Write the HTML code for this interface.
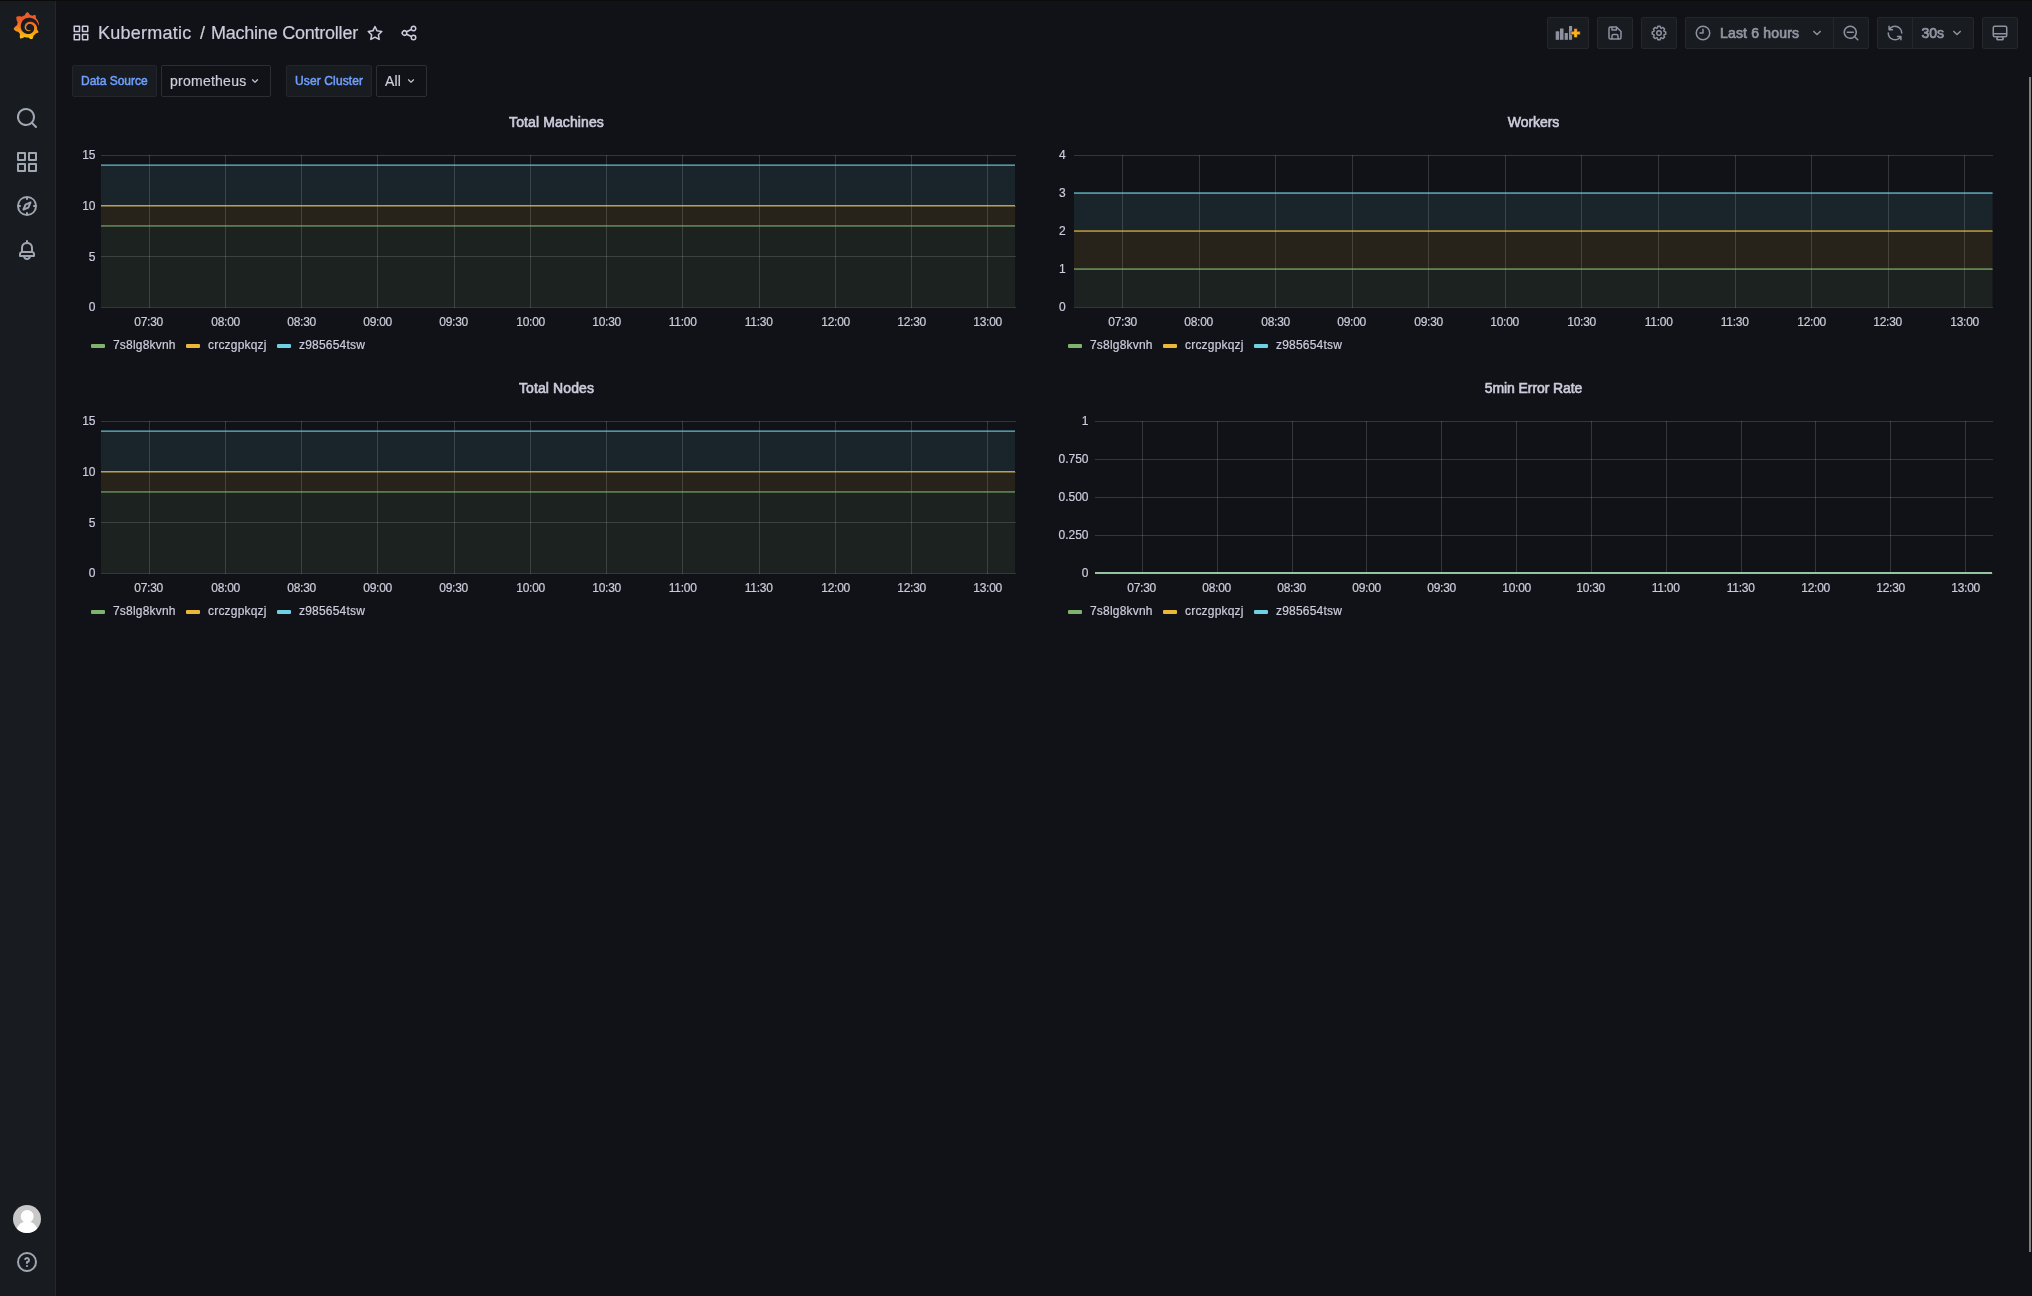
<!DOCTYPE html>
<html lang="en"><head><meta charset="utf-8"><title>Kubermatic / Machine Controller - Grafana</title>
<style>
html,body{margin:0;padding:0;}
body{width:2032px;height:1296px;overflow:hidden;background:#111217;color:#ccccdc;font-family:"Liberation Sans",sans-serif;font-size:14px;position:relative;}
.abs,.ic,.t{position:absolute;}
.ic{display:block;}
.t{white-space:pre;line-height:1;-webkit-text-stroke:0.2px currentColor;}
.side{left:0;top:0;width:55px;height:1296px;background:#181b1f;border-right:1px solid #24262c;}
.btn{position:absolute;top:17px;height:30px;background:#181b1f;border:1px solid #24272d;border-radius:2px;}
.lbl{position:absolute;top:65px;height:30px;background:#181b1f;border:1px solid #22252b;border-radius:2px;}
.sel{position:absolute;top:65px;height:30px;background:#111217;border:1px solid #2c2e35;border-radius:2px;}
.med{-webkit-text-stroke:0.5px currentColor;}
.title{font-size:14px;color:#ccccdc;text-align:center;width:400px;letter-spacing:0.1px;-webkit-text-stroke:0.6px currentColor;}
.ax{font-size:12px;color:#ccccdc;}
.axr{text-align:right;width:60px;}
.axc{text-align:center;width:60px;letter-spacing:-0.25px;}
.lg{font-size:12px;color:#ccccdc;letter-spacing:0.2px;}
.sw{position:absolute;width:14px;height:4px;border-radius:1px;}
#wrap{position:absolute;left:0;top:0;width:2032px;height:1296px;will-change:transform;}
</style></head><body><div id="wrap">

<div class="abs" style="left:0;top:0;width:2032px;height:1px;background:#0b0b0c;z-index:5"></div>
<div class="abs side"></div>
<svg class="ic" style="left:13px;top:11.5px;width:26.5px;height:27.6px" viewBox="0 0 351 365"><defs><linearGradient id="lg1" gradientUnits="userSpaceOnUse" x1="175.5" y1="445" x2="175.5" y2="114"><stop offset="0" stop-color="#FFF100"/><stop offset="1" stop-color="#F05A28"/></linearGradient></defs><path fill="url(#lg1)" d="M342,161.2c-0.6-6.1-1.6-13.1-3.6-20.9c-2-7.7-5-16.2-9.4-25c-4.4-8.8-10.1-17.9-17.5-26.8c-2.9-3.5-6.1-6.9-9.5-10.2c5.1-20.3-6.2-37.9-6.2-37.9c-19.5-1.2-31.9,6.1-36.5,9.4c-0.8-0.3-1.5-0.7-2.3-1c-3.3-1.3-6.7-2.6-10.3-3.7c-3.5-1.1-7.1-2.1-10.8-3c-3.7-0.9-7.4-1.6-11.2-2.2c-0.7-0.1-1.3-0.2-2-0.3c-8.5-27.2-32.9-38.6-32.9-38.6c-27.3,17.3-32.4,41.5-32.4,41.5s-0.1,0.5-0.3,1.4c-1.5,0.4-3,0.9-4.5,1.3c-2.1,0.6-4.2,1.4-6.2,2.2c-2.1,0.8-4.1,1.6-6.2,2.5c-4.1,1.8-8.2,3.8-12.2,6c-3.9,2.2-7.7,4.6-11.4,7.1c-0.5-0.2-1-0.4-1-0.4c-37.8-14.4-71.3,2.9-71.3,2.9c-3.1,40.2,15.1,65.5,18.7,70.1c-0.9,2.5-1.7,5-2.5,7.5c-2.8,9.1-4.9,18.4-6.2,28.1c-0.2,1.4-0.4,2.8-0.5,4.2C18.8,192.7,8.5,228,8.5,228c29.1,33.5,63.1,35.6,63.1,35.6c0,0,0.1-0.1,0.1-0.1c4.3,7.7,9.3,15,14.9,21.9c2.4,2.9,4.8,5.6,7.4,8.3c-10.6,30.4,1.5,55.6,1.5,55.6c32.4,1.2,53.7-14.2,58.2-17.7c3.2,1.1,6.5,2.1,9.8,2.9c10,2.6,20.2,4.1,30.4,4.5c2.5,0.1,5.1,0.2,7.6,0.1l1.2,0l0.8,0l1.6,0l1.6-0.1l0,0.1c15.3,21.8,42.1,24.9,42.1,24.9c19.1-20.1,20.2-40.1,20.2-44.4l0,0c0,0,0-0.1,0-0.3c0-0.4,0-0.6,0-0.6l0,0c0-0.3,0-0.6,0-0.9c4-2.8,7.8-5.8,11.4-9.1c7.6-6.9,14.3-14.8,19.9-23.3c0.5-0.8,1-1.6,1.5-2.4c21.6,1.2,36.9-13.4,36.9-13.4c-3.6-22.5-16.4-33.5-19.1-35.6l0,0c0,0-0.1-0.1-0.3-0.2c-0.2-0.1-0.2-0.2-0.2-0.2c0,0,0,0,0,0c-0.1-0.1-0.3-0.2-0.5-0.3c0.1-1.4,0.2-2.7,0.3-4.1c0.2-2.4,0.2-4.9,0.2-7.3l0-1.8l0-0.9l0-0.5c0-0.6,0-0.4,0-0.6l-0.1-1.5l-0.1-2c0-0.7-0.1-1.3-0.2-1.9c-0.1-0.6-0.1-1.3-0.2-1.9l-0.2-1.9l-0.3-1.9c-0.4-2.5-0.8-4.9-1.4-7.4c-2.3-9.7-6.1-18.9-11-27.2c-5-8.3-11.2-15.6-18.3-21.8c-7-6.2-14.9-11.2-23.1-14.9c-8.3-3.7-16.9-6.1-25.5-7.2c-4.3-0.6-8.6-0.8-12.9-0.7l-1.6,0l-0.4,0c-0.1,0-0.6,0-0.5,0l-0.7,0l-1.6,0.1c-0.6,0-1.2,0.1-1.7,0.1c-2.2,0.2-4.4,0.5-6.5,0.9c-8.6,1.6-16.7,4.7-23.8,9c-7.1,4.3-13.3,9.6-18.3,15.6c-5,6-8.9,12.7-11.6,19.6c-2.7,6.9-4.2,14.1-4.6,21c-0.1,1.7-0.1,3.5-0.1,5.2c0,0.4,0,0.9,0,1.3l0.1,1.4c0.1,0.8,0.1,1.7,0.2,2.5c0.3,3.5,1,6.9,1.9,10.1c1.9,6.5,4.9,12.4,8.6,17.4c3.7,5,8.2,9.1,12.9,12.4c4.7,3.2,9.8,5.5,14.8,7c5,1.5,10,2.1,14.7,2.1c0.6,0,1.2,0,1.7,0c0.3,0,0.6,0,0.9,0c0.3,0,0.6,0,0.9-0.1c0.5,0,1-0.1,1.5-0.1c0.1,0,0.3,0,0.4-0.1l0.5-0.1c0.3,0,0.6-0.1,0.9-0.1c0.6-0.1,1.1-0.2,1.7-0.3c0.6-0.1,1.1-0.2,1.6-0.4c1.1-0.2,2.1-0.6,3.1-0.9c2-0.7,4-1.5,5.7-2.4c1.8-0.9,3.4-2,5-3c0.4-0.3,0.9-0.6,1.3-1c1.6-1.3,1.9-3.7,0.6-5.3c-1.1-1.4-3.1-1.8-4.7-0.9c-0.4,0.2-0.8,0.4-1.2,0.6c-1.4,0.7-2.8,1.3-4.3,1.8c-1.5,0.5-3.1,0.9-4.7,1.2c-0.8,0.1-1.6,0.2-2.5,0.3c-0.4,0-0.8,0.1-1.3,0.1c-0.4,0-0.9,0-1.2,0c-0.4,0-0.8,0-1.2,0c-0.5,0-1,0-1.5-0.1c0,0-0.3,0-0.1,0l-0.2,0l-0.3,0c-0.2,0-0.5,0-0.7-0.1c-0.5-0.1-0.9-0.1-1.4-0.2c-3.7-0.5-7.4-1.6-10.9-3.2c-3.6-1.6-7-3.8-10.1-6.6c-3.1-2.8-5.8-6.1-7.9-9.9c-2.1-3.8-3.6-8-4.3-12.4c-0.3-2.2-0.5-4.5-0.4-6.7c0-0.6,0.1-1.2,0.1-1.8c0,0.2,0-0.1,0-0.1l0-0.2l0-0.5c0-0.3,0.1-0.6,0.1-0.9c0.1-1.2,0.3-2.4,0.5-3.6c1.7-9.6,6.5-19,13.9-26.1c1.9-1.8,3.9-3.4,6-4.9c2.1-1.5,4.4-2.8,6.8-3.9c2.4-1.1,4.8-2,7.4-2.7c2.5-0.7,5.1-1.1,7.8-1.4c1.3-0.1,2.6-0.2,4-0.2c0.4,0,0.6,0,0.9,0l1.1,0l0.7,0c0.3,0,0,0,0.1,0l0.3,0l1.1,0.1c2.9,0.2,5.7,0.6,8.5,1.3c5.6,1.2,11.1,3.3,16.2,6.1c10.2,5.7,18.9,14.5,24.2,25.1c2.7,5.3,4.6,11,5.5,16.9c0.2,1.5,0.4,3,0.5,4.5l0.1,1.1l0.1,1.1c0,0.4,0,0.8,0,1.1c0,0.4,0,0.8,0,1.1l0,1l0,1.1c0,0.7-0.1,1.9-0.1,2.6c-0.1,1.6-0.3,3.3-0.5,4.9c-0.2,1.6-0.5,3.2-0.8,4.8c-0.3,1.6-0.7,3.2-1.1,4.7c-0.8,3.1-1.8,6.2-3,9.3c-2.4,6-5.6,11.8-9.4,17.1c-7.7,10.6-18.2,19.2-30.2,24.7c-6,2.7-12.3,4.7-18.8,5.7c-3.2,0.6-6.5,0.9-9.8,1l-0.6,0l-0.5,0l-1.1,0l-1.6,0l-0.8,0c0.4,0-0.1,0-0.1,0l-0.3,0c-1.8,0-3.5-0.1-5.3-0.3c-7-0.5-13.9-1.8-20.7-3.7c-6.7-1.9-13.2-4.6-19.4-7.8c-12.3-6.6-23.4-15.6-32-26.5c-4.3-5.4-8.1-11.3-11.2-17.4c-3.1-6.1-5.6-12.6-7.4-19.1c-1.8-6.6-2.9-13.3-3.4-20.1l-0.1-1.3l0-0.3l0-0.3l0-0.6l0-1.1l0-0.3l0-0.4l0-0.8l0-1.6l0-0.3c0,0,0,0.1,0-0.1l0-0.6c0-0.8,0-1.7,0-2.5c0.1-3.3,0.4-6.8,0.8-10.2c0.4-3.4,1-6.9,1.7-10.3c0.7-3.4,1.5-6.8,2.5-10.2c1.9-6.7,4.3-13.2,7.1-19.3c5.7-12.2,13.1-23.1,22-31.8c2.2-2.2,4.5-4.2,6.9-6.2c2.4-1.9,4.9-3.7,7.5-5.4c2.5-1.7,5.2-3.2,7.9-4.6c1.3-0.7,2.7-1.4,4.1-2c0.7-0.3,1.4-0.6,2.1-0.9c0.7-0.3,1.4-0.6,2.1-0.9c2.8-1.2,5.7-2.2,8.7-3.1c0.7-0.2,1.5-0.4,2.2-0.7c0.7-0.2,1.5-0.4,2.2-0.6c1.5-0.4,3-0.8,4.5-1.1c0.7-0.2,1.5-0.3,2.3-0.5c0.8-0.2,1.5-0.3,2.3-0.5c0.8-0.1,1.5-0.3,2.3-0.4l1.1-0.2l1.2-0.2c0.8-0.1,1.5-0.2,2.3-0.3c0.9-0.1,1.7-0.2,2.6-0.3c0.7-0.1,1.9-0.2,2.6-0.3c0.5-0.1,1.1-0.1,1.6-0.2l1.1-0.1l0.5-0.1l0.6,0c0.9-0.1,1.7-0.1,2.6-0.2l1.3-0.1c0,0,0.5,0,0.1,0l0.3,0l0.6,0c0.7,0,1.5-0.1,2.2-0.1c2.9-0.1,5.9-0.1,8.8,0c5.8,0.2,11.5,0.9,17,1.9c11.1,2.1,21.5,5.6,31,10.3c9.5,4.6,17.9,10.3,25.3,16.5c0.5,0.4,0.9,0.8,1.4,1.2c0.4,0.4,0.9,0.8,1.3,1.2c0.9,0.8,1.7,1.6,2.6,2.4c0.9,0.8,1.7,1.6,2.5,2.4c0.8,0.8,1.6,1.6,2.4,2.5c3.1,3.3,6,6.6,8.6,10c5.2,6.7,9.4,13.5,12.7,19.9c0.2,0.4,0.4,0.8,0.6,1.2c0.2,0.4,0.4,0.8,0.6,1.2c0.4,0.8,0.8,1.6,1.1,2.4c0.4,0.8,0.7,1.5,1.1,2.3c0.3,0.8,0.7,1.5,1,2.3c1.2,3,2.4,5.9,3.3,8.6c1.5,4.4,2.6,8.3,3.5,11.7c0.3,1.4,1.6,2.3,3,2.1c1.5-0.1,2.6-1.3,2.6-2.8C342.6,170.4,342.5,166.1,342,161.2z"/></svg>
<svg class="ic" style="left:15px;top:106px;width:24px;height:24px;fill:#9fa7b3;" viewBox="0 0 24 24"><path d="M21.71,20.29,18,16.61A9,9,0,1,0,16.61,18l3.68,3.68a1,1,0,0,0,1.42,0A1,1,0,0,0,21.71,20.29ZM11,18a7,7,0,1,1,7-7A7,7,0,0,1,11,18Z"/></svg>
<svg class="ic" style="left:15px;top:150px;width:24px;height:24px;fill:#9fa7b3;" viewBox="0 0 24 24"><path d="M10,13H3a1,1,0,0,0-1,1v7a1,1,0,0,0,1,1h7a1,1,0,0,0,1-1V14A1,1,0,0,0,10,13ZM9,20H4V15H9ZM21,2H14a1,1,0,0,0-1,1v7a1,1,0,0,0,1,1h7a1,1,0,0,0,1-1V3A1,1,0,0,0,21,2ZM20,9H15V4h5Zm1,4H14a1,1,0,0,0-1,1v7a1,1,0,0,0,1,1h7a1,1,0,0,0,1-1V14A1,1,0,0,0,21,13Zm-1,7H15V15h5ZM10,2H3A1,1,0,0,0,2,3v7a1,1,0,0,0,1,1h7a1,1,0,0,0,1-1V3A1,1,0,0,0,10,2ZM9,9H4V4H9Z"/></svg>
<svg class="ic" style="left:15px;top:194px;width:24px;height:24px;fill:#9fa7b3;" viewBox="0 0 24 24"><path d="M12,2A10,10,0,1,0,22,12,10,10,0,0,0,12,2Zm1,17.93V19a1,1,0,0,0-2,0v.93A8,8,0,0,1,4.07,13H5a1,1,0,0,0,0-2H4.07A8,8,0,0,1,11,4.07V5a1,1,0,0,0,2,0V4.07A8,8,0,0,1,19.93,11H19a1,1,0,0,0,0,2h.93A8,8,0,0,1,13,19.93ZM15.14,7.55l-5,2.12a1,1,0,0,0-.52.52l-2.12,5a1,1,0,0,0,.21,1.1,1,1,0,0,0,.7.3.93.93,0,0,0,.4-.09l5-2.12a1,1,0,0,0,.52-.52l2.12-5a1,1,0,0,0-1.31-1.31Zm-2.49,5.1-2.28,1,1-2.28,2.28-1Z"/></svg>
<svg class="ic" style="left:15px;top:238px;width:24px;height:24px;fill:#9fa7b3;" viewBox="0 0 24 24"><path d="M18,13.18V10a6,6,0,0,0-5-5.91V3a1,1,0,0,0-2,0V4.09A6,6,0,0,0,6,10v3.18A3,3,0,0,0,4,16v2a1,1,0,0,0,1,1H8.14a4,4,0,0,0,7.72,0H19a1,1,0,0,0,1-1V16A3,3,0,0,0,18,13.18ZM8,10a4,4,0,0,1,8,0v3H8Zm4,10a2,2,0,0,1-1.72-1h3.44A2,2,0,0,1,12,20Zm6-3H6V16a1,1,0,0,1,1-1H17a1,1,0,0,1,1,1Z"/></svg>
<svg class="ic" style="left:13px;top:1205px;width:28px;height:28px" viewBox="0 0 28 28"><defs><clipPath id="av"><circle cx="14" cy="14" r="14"/></clipPath></defs><circle cx="14" cy="14" r="14" fill="#c8c8c8"/><g clip-path="url(#av)" fill="#fff"><circle cx="14.2" cy="11.4" r="6.4"/><ellipse cx="14" cy="27.5" rx="11" ry="11"/></g></svg>
<svg class="ic" style="left:15px;top:1250px;width:24px;height:24px;fill:#9fa7b3;" viewBox="0 0 24 24"><path d="M11.29,15.29a1.58,1.58,0,0,0-.12.15.76.76,0,0,0-.09.18.64.64,0,0,0-.06.18,1.36,1.36,0,0,0,0,.2.84.84,0,0,0,.08.38.9.9,0,0,0,.54.54.94.94,0,0,0,.76,0,.9.9,0,0,0,.54-.54A1,1,0,0,0,13,16a1,1,0,0,0-.29-.71A1,1,0,0,0,11.29,15.29ZM12,2A10,10,0,1,0,22,12,10,10,0,0,0,12,2Zm0,18a8,8,0,1,1,8-8A8,8,0,0,1,12,20ZM12,7A3,3,0,0,0,9.4,8.5a1,1,0,1,0,1.73,1A1,1,0,0,1,12,9a1,1,0,0,1,0,2,1,1,0,0,0-1,1v1a1,1,0,0,0,2,0v-.18A3,3,0,0,0,12,7Z"/></svg>
<svg class="ic" style="left:72px;top:24px;width:18px;height:18px;fill:#ccccdc;" viewBox="0 0 24 24"><path d="M10,13H3a1,1,0,0,0-1,1v7a1,1,0,0,0,1,1h7a1,1,0,0,0,1-1V14A1,1,0,0,0,10,13ZM9,20H4V15H9ZM21,2H14a1,1,0,0,0-1,1v7a1,1,0,0,0,1,1h7a1,1,0,0,0,1-1V3A1,1,0,0,0,21,2ZM20,9H15V4h5Zm1,4H14a1,1,0,0,0-1,1v7a1,1,0,0,0,1,1h7a1,1,0,0,0,1-1V14A1,1,0,0,0,21,13Zm-1,7H15V15h5ZM10,2H3A1,1,0,0,0,2,3v7a1,1,0,0,0,1,1h7a1,1,0,0,0,1-1V3A1,1,0,0,0,10,2ZM9,9H4V4H9Z"/></svg>
<div class="t" style="left:98px;top:24px;font-size:18px;letter-spacing:0.25px">Kubermatic</div>
<div class="t" style="left:200px;top:24px;font-size:18px;">/</div>
<div class="t" style="left:211px;top:24px;font-size:18px;letter-spacing:-0.23px">Machine Controller</div>
<svg class="ic" style="left:366px;top:24px;width:18px;height:18px;fill:#ccccdc;" viewBox="0 0 24 24"><path d="M22,9.67A1,1,0,0,0,21.14,9l-5.69-.83L12.9,3a1,1,0,0,0-1.8,0L8.55,8.16,2.86,9a1,1,0,0,0-.81.68,1,1,0,0,0,.25,1l4.13,4-1,5.68A1,1,0,0,0,6.9,21.44L12,18.77l5.1,2.67a.93.93,0,0,0,.46.12,1,1,0,0,0,.59-.19,1,1,0,0,0,.4-1l-1-5.68,4.13-4A1,1,0,0,0,22,9.67Zm-6.15,4a1,1,0,0,0-.29.88l.72,4.2-3.76-2a1.06,1.06,0,0,0-.94,0l-3.76,2,.72-4.2a1,1,0,0,0-.29-.88l-3-3,4.21-.61a1,1,0,0,0,.76-.55L12,5.7l1.88,3.82a1,1,0,0,0,.76.55l4.21.61Z"/></svg>
<svg class="ic" style="left:400px;top:24px;width:18px;height:18px;fill:#ccccdc;" viewBox="0 0 24 24"><path d="M18,14a4,4,0,0,0-3.08,1.48l-5.1-2.35a3.64,3.64,0,0,0,0-2.26l5.1-2.35A4,4,0,1,0,14,6a4.17,4.17,0,0,0,.07.71L8.79,9.14a4,4,0,1,0,0,5.72l5.28,2.43A4.17,4.17,0,0,0,14,18a4,4,0,1,0,4-4ZM18,4a2,2,0,1,1-2,2A2,2,0,0,1,18,4ZM6,14a2,2,0,1,1,2-2A2,2,0,0,1,6,14Zm12,6a2,2,0,1,1,2-2A2,2,0,0,1,18,20Z"/></svg>
<div class="btn" style="left:1547px;width:40px;"></div>
<div class="btn" style="left:1597px;width:34px;"></div>
<div class="btn" style="left:1641px;width:34px;"></div>
<div class="btn" style="left:1685px;width:182px;"></div>
<div class="abs" style="left:1833px;top:18px;width:1px;height:30px;background:#24272d"></div>
<div class="btn" style="left:1877px;width:95px;"></div>
<div class="abs" style="left:1912px;top:18px;width:1px;height:30px;background:#24272d"></div>
<div class="btn" style="left:1982px;width:34px;"></div>
<svg class="ic" style="left:1555px;top:25px;width:26px;height:16px" viewBox="0 0 26 16">
<defs><linearGradient id="pg" x1="0" y1="0" x2="0" y2="1"><stop offset="0" stop-color="#ff9830"/><stop offset="1" stop-color="#fbca0a"/></linearGradient></defs>
<g fill="#9091a0"><rect x="0.7" y="6.3" width="3.5" height="8.5"/><rect x="5" y="3.5" width="3.5" height="11.3"/><rect x="9.7" y="8" width="3.2" height="6.8"/><rect x="14" y="1" width="3.1" height="13.8"/></g>
<path fill="url(#pg)" stroke="#181b1f" stroke-width="0.5" d="M18.9 3.4h3.4v2.9h2.9v3.4h-2.9v2.9h-3.4v-2.9h-2.9v-3.4h2.9z"/>
</svg>
<svg class="ic" style="left:1606px;top:24px;width:18px;height:18px;fill:#9091a0;" viewBox="0 0 24 24"><path d="M20.71,9.29l-6-6a1,1,0,0,0-.32-.21A1.09,1.09,0,0,0,14,3H6A3,3,0,0,0,3,6V18a3,3,0,0,0,3,3H18a3,3,0,0,0,3-3V10A1,1,0,0,0,20.71,9.29ZM9,5h4V7H9Zm6,14H9V16a1,1,0,0,1,1-1h4a1,1,0,0,1,1,1Zm4-1a1,1,0,0,1-1,1H17V16a3,3,0,0,0-3-3H10a3,3,0,0,0-3,3v3H6a1,1,0,0,1-1-1V6A1,1,0,0,1,6,5H7V8A1,1,0,0,0,8,9h6a1,1,0,0,0,1-1V6.41l4,4Z"/></svg>
<svg class="ic" style="left:1650px;top:24px;width:18px;height:18px;fill:#9091a0;" viewBox="0 0 24 24"><path d="M21.32,9.55l-1.89-.63.89-1.78A1,1,0,0,0,20.13,6L18,3.87a1,1,0,0,0-1.15-.19l-1.78.89-.63-1.89A1,1,0,0,0,13.5,2h-3a1,1,0,0,0-.95.68L8.92,4.57,7.14,3.68A1,1,0,0,0,6,3.87L3.87,6a1,1,0,0,0-.19,1.15l.89,1.78-1.89.63A1,1,0,0,0,2,10.5v3a1,1,0,0,0,.68.95l1.89.63-.89,1.78A1,1,0,0,0,3.87,18L6,20.13a1,1,0,0,0,1.15.19l1.78-.89.63,1.89a1,1,0,0,0,.95.68h3a1,1,0,0,0,.95-.68l.63-1.89,1.78.89A1,1,0,0,0,18,20.13L20.13,18a1,1,0,0,0,.19-1.15l-.89-1.78,1.89-.63A1,1,0,0,0,22,13.5v-3A1,1,0,0,0,21.32,9.55ZM20,12.78l-1.2.4A2,2,0,0,0,17.64,16l.57,1.14-1.1,1.1L16,17.64a2,2,0,0,0-2.79,1.16l-.4,1.2H11.22l-.4-1.2A2,2,0,0,0,8,17.64l-1.14.57-1.1-1.1L6.36,16A2,2,0,0,0,5.2,13.18L4,12.78V11.22l1.2-.4A2,2,0,0,0,6.36,8L5.79,6.89l1.1-1.1L8,6.36A2,2,0,0,0,10.82,5.2l.4-1.2h1.56l.4,1.2A2,2,0,0,0,16,6.36l1.14-.57,1.1,1.1L17.64,8a2,2,0,0,0,1.16,2.79l1.2.4ZM12,8a4,4,0,1,0,4,4A4,4,0,0,0,12,8Zm0,6a2,2,0,1,1,2-2A2,2,0,0,1,12,14Z"/></svg>
<svg class="ic" style="left:1694px;top:24px;width:18px;height:18px;fill:#9091a0;" viewBox="0 0 24 24"><path d="M12,2A10,10,0,1,0,22,12,10.01114,10.01114,0,0,0,12,2Zm0,18a8,8,0,1,1,8-8A8.00917,8.00917,0,0,1,12,20ZM12,6a.99974.99974,0,0,0-1,1v4H8a1,1,0,0,0,0,2h4a.99974.99974,0,0,0,1-1V7A.99974.99974,0,0,0,12,6Z"/></svg>
<div class="t med" style="left:1720px;top:26.3px;font-size:14px;letter-spacing:0.18px;color:#9395a3;-webkit-text-stroke-width:0.7px">Last 6 hours</div>
<svg class="ic" style="left:1808px;top:24px;width:18px;height:18px;fill:#9091a0;" viewBox="0 0 24 24"><path d="M17,9.17a1,1,0,0,0-1.41,0L12,12.71,8.46,9.17a1,1,0,0,0-1.41,0,1,1,0,0,0,0,1.42l4.24,4.24a1,1,0,0,0,1.42,0L17,10.59A1,1,0,0,0,17,9.17Z"/></svg>
<svg class="ic" style="left:1842px;top:24px;width:18px;height:18px;fill:#9091a0;" viewBox="0 0 24 24"><path d="M21.71,20.29,18,16.61A9,9,0,1,0,16.61,18l3.68,3.68a1,1,0,0,0,1.42,0A1,1,0,0,0,21.71,20.29ZM11,18a7,7,0,1,1,7-7A7,7,0,0,1,11,18Zm4-8H7a1,1,0,0,0,0,2h8a1,1,0,0,0,0-2Z"/></svg>
<svg class="ic" style="left:1886px;top:24px;width:18px;height:18px;fill:#9091a0;" viewBox="0 0 24 24"><path d="M19.91,15.51H15.38a1,1,0,0,0,0,2h2.4A8,8,0,0,1,4,12a1,1,0,0,0-2,0,10,10,0,0,0,16.88,7.23V21a1,1,0,0,0,2,0V16.5A1,1,0,0,0,19.91,15.51ZM12,2A10,10,0,0,0,5.12,4.77V3a1,1,0,0,0-2,0V7.5a1,1,0,0,0,1,1h4.5a1,1,0,0,0,0-2H6.22A8,8,0,0,1,20,12a1,1,0,0,0,2,0A10,10,0,0,0,12,2Z"/></svg>
<div class="t med" style="left:1921.5px;top:26.3px;font-size:14px;color:#9395a3;-webkit-text-stroke-width:0.7px">30s</div>
<svg class="ic" style="left:1948px;top:24px;width:18px;height:18px;fill:#9091a0;" viewBox="0 0 24 24"><path d="M17,9.17a1,1,0,0,0-1.41,0L12,12.71,8.46,9.17a1,1,0,0,0-1.41,0,1,1,0,0,0,0,1.42l4.24,4.24a1,1,0,0,0,1.42,0L17,10.59A1,1,0,0,0,17,9.17Z"/></svg>
<svg class="ic" style="left:1991px;top:24px;width:18px;height:18px;fill:#9091a0;" viewBox="0 0 24 24"><path d="M19,2H5A3,3,0,0,0,2,5V15a3,3,0,0,0,3,3H7.64l-.58,1a2,2,0,0,0,0,2,2,2,0,0,0,1.75,1h6.46A2,2,0,0,0,17,21a2,2,0,0,0,0-2l-.59-1H19a3,3,0,0,0,3-3V5A3,3,0,0,0,19,2ZM8.77,20,10,18H14l1.2,2ZM20,15a1,1,0,0,1-1,1H5a1,1,0,0,1-1-1V14H20Zm0-3H4V5A1,1,0,0,1,5,4H19a1,1,0,0,1,1,1Z"/></svg>
<div class="lbl" style="left:72px;width:83px"></div>
<div class="t med" style="left:81px;top:75px;font-size:12px;color:#6e9fff;">Data Source</div>
<div class="sel" style="left:161px;width:108px"></div>
<div class="t" style="left:170px;top:74px;font-size:14px;letter-spacing:0.25px">prometheus</div>
<svg class="ic" style="left:248px;top:74px;width:14px;height:14px;fill:#ccccdc;" viewBox="0 0 24 24"><path d="M17,9.17a1,1,0,0,0-1.41,0L12,12.71,8.46,9.17a1,1,0,0,0-1.41,0,1,1,0,0,0,0,1.42l4.24,4.24a1,1,0,0,0,1.42,0L17,10.59A1,1,0,0,0,17,9.17Z"/></svg>
<div class="lbl" style="left:286px;width:84px"></div>
<div class="t med" style="left:295px;top:75px;font-size:12px;color:#6e9fff;letter-spacing:0.13px">User Cluster</div>
<div class="sel" style="left:376px;width:49px"></div>
<div class="t" style="left:385px;top:74px;font-size:14px;letter-spacing:0.2px">All</div>
<svg class="ic" style="left:404px;top:74px;width:14px;height:14px;fill:#ccccdc;" viewBox="0 0 24 24"><path d="M17,9.17a1,1,0,0,0-1.41,0L12,12.71,8.46,9.17a1,1,0,0,0-1.41,0,1,1,0,0,0,0,1.42l4.24,4.24a1,1,0,0,0,1.42,0L17,10.59A1,1,0,0,0,17,9.17Z"/></svg>
<div class="abs" style="left:2029px;top:77px;width:2px;height:1175px;background:#7d7d7d"></div>
<svg class="ic" style="left:0;top:0;width:2032px;height:1296px;pointer-events:none" viewBox="0 0 2032 1296"><rect x="101" y="307" width="915" height="1" fill="#f0faff" fill-opacity="0.157" shape-rendering="crispEdges"/><rect x="101" y="256" width="915" height="1" fill="#f0faff" fill-opacity="0.157" shape-rendering="crispEdges"/><rect x="101" y="206" width="915" height="1" fill="#f0faff" fill-opacity="0.157" shape-rendering="crispEdges"/><rect x="101" y="155" width="915" height="1" fill="#f0faff" fill-opacity="0.157" shape-rendering="crispEdges"/><rect x="149" y="155" width="1" height="153" fill="#f0faff" fill-opacity="0.157" shape-rendering="crispEdges"/><rect x="225" y="155" width="1" height="153" fill="#f0faff" fill-opacity="0.157" shape-rendering="crispEdges"/><rect x="301" y="155" width="1" height="153" fill="#f0faff" fill-opacity="0.157" shape-rendering="crispEdges"/><rect x="377" y="155" width="1" height="153" fill="#f0faff" fill-opacity="0.157" shape-rendering="crispEdges"/><rect x="454" y="155" width="1" height="153" fill="#f0faff" fill-opacity="0.157" shape-rendering="crispEdges"/><rect x="530" y="155" width="1" height="153" fill="#f0faff" fill-opacity="0.157" shape-rendering="crispEdges"/><rect x="606" y="155" width="1" height="153" fill="#f0faff" fill-opacity="0.157" shape-rendering="crispEdges"/><rect x="682" y="155" width="1" height="153" fill="#f0faff" fill-opacity="0.157" shape-rendering="crispEdges"/><rect x="759" y="155" width="1" height="153" fill="#f0faff" fill-opacity="0.157" shape-rendering="crispEdges"/><rect x="835" y="155" width="1" height="153" fill="#f0faff" fill-opacity="0.157" shape-rendering="crispEdges"/><rect x="911" y="155" width="1" height="153" fill="#f0faff" fill-opacity="0.157" shape-rendering="crispEdges"/><rect x="987" y="155" width="1" height="153" fill="#f0faff" fill-opacity="0.157" shape-rendering="crispEdges"/><rect x="101" y="225.93" width="914.0" height="81.07" fill="#7eb26d" fill-opacity="0.1"/><rect x="101" y="205.67" width="914.0" height="20.27" fill="#eab839" fill-opacity="0.1"/><rect x="101" y="165.13" width="914.0" height="40.53" fill="#6ed0e0" fill-opacity="0.1"/><rect x="101" y="225.28" width="914.0" height="1.3" fill="#7eb26d" fill-opacity="0.86"/><rect x="101" y="205.02" width="914.0" height="1.3" fill="#eab839" fill-opacity="0.86"/><rect x="101" y="164.48" width="914.0" height="1.3" fill="#6ed0e0" fill-opacity="0.86"/></svg>
<div class="t title med" style="left:356.5px;top:115px;letter-spacing:0.1px">Total Machines</div>
<div class="t ax axr" style="left:35.5px;top:300.5px">0</div>
<div class="t ax axr" style="left:35.5px;top:250.8px">5</div>
<div class="t ax axr" style="left:35.5px;top:199.8px">10</div>
<div class="t ax axr" style="left:35.5px;top:148.5px">15</div>
<div class="t ax axc" style="left:118.67px;top:316px">07:30</div>
<div class="t ax axc" style="left:195.67px;top:316px">08:00</div>
<div class="t ax axc" style="left:271.67px;top:316px">08:30</div>
<div class="t ax axc" style="left:347.67px;top:316px">09:00</div>
<div class="t ax axc" style="left:423.67px;top:316px">09:30</div>
<div class="t ax axc" style="left:500.67px;top:316px">10:00</div>
<div class="t ax axc" style="left:576.67px;top:316px">10:30</div>
<div class="t ax axc" style="left:652.67px;top:316px">11:00</div>
<div class="t ax axc" style="left:728.67px;top:316px">11:30</div>
<div class="t ax axc" style="left:805.67px;top:316px">12:00</div>
<div class="t ax axc" style="left:881.67px;top:316px">12:30</div>
<div class="t ax axc" style="left:957.67px;top:316px">13:00</div>
<div class="sw" style="left:91px;top:344px;background:#7eb26d"></div>
<div class="t lg" style="left:113px;top:339px">7s8lg8kvnh</div>
<div class="sw" style="left:186px;top:344px;background:#eab839"></div>
<div class="t lg" style="left:208px;top:339px">crczgpkqzj</div>
<div class="sw" style="left:277px;top:344px;background:#6ed0e0"></div>
<div class="t lg" style="left:299px;top:339px">z985654tsw</div>
<svg class="ic" style="left:0;top:0;width:2032px;height:1296px;pointer-events:none" viewBox="0 0 2032 1296"><rect x="1074" y="307" width="919" height="1" fill="#f0faff" fill-opacity="0.157" shape-rendering="crispEdges"/><rect x="1074" y="269" width="919" height="1" fill="#f0faff" fill-opacity="0.157" shape-rendering="crispEdges"/><rect x="1074" y="231" width="919" height="1" fill="#f0faff" fill-opacity="0.157" shape-rendering="crispEdges"/><rect x="1074" y="193" width="919" height="1" fill="#f0faff" fill-opacity="0.157" shape-rendering="crispEdges"/><rect x="1074" y="155" width="919" height="1" fill="#f0faff" fill-opacity="0.157" shape-rendering="crispEdges"/><rect x="1122" y="155" width="1" height="153" fill="#f0faff" fill-opacity="0.157" shape-rendering="crispEdges"/><rect x="1199" y="155" width="1" height="153" fill="#f0faff" fill-opacity="0.157" shape-rendering="crispEdges"/><rect x="1275" y="155" width="1" height="153" fill="#f0faff" fill-opacity="0.157" shape-rendering="crispEdges"/><rect x="1352" y="155" width="1" height="153" fill="#f0faff" fill-opacity="0.157" shape-rendering="crispEdges"/><rect x="1428" y="155" width="1" height="153" fill="#f0faff" fill-opacity="0.157" shape-rendering="crispEdges"/><rect x="1505" y="155" width="1" height="153" fill="#f0faff" fill-opacity="0.157" shape-rendering="crispEdges"/><rect x="1581" y="155" width="1" height="153" fill="#f0faff" fill-opacity="0.157" shape-rendering="crispEdges"/><rect x="1658" y="155" width="1" height="153" fill="#f0faff" fill-opacity="0.157" shape-rendering="crispEdges"/><rect x="1735" y="155" width="1" height="153" fill="#f0faff" fill-opacity="0.157" shape-rendering="crispEdges"/><rect x="1811" y="155" width="1" height="153" fill="#f0faff" fill-opacity="0.157" shape-rendering="crispEdges"/><rect x="1888" y="155" width="1" height="153" fill="#f0faff" fill-opacity="0.157" shape-rendering="crispEdges"/><rect x="1964" y="155" width="1" height="153" fill="#f0faff" fill-opacity="0.157" shape-rendering="crispEdges"/><rect x="1074" y="269.00" width="918.5" height="38.00" fill="#7eb26d" fill-opacity="0.1"/><rect x="1074" y="231.00" width="918.5" height="38.00" fill="#eab839" fill-opacity="0.1"/><rect x="1074" y="193.00" width="918.5" height="38.00" fill="#6ed0e0" fill-opacity="0.1"/><rect x="1074" y="268.35" width="918.5" height="1.3" fill="#7eb26d" fill-opacity="0.86"/><rect x="1074" y="230.35" width="918.5" height="1.3" fill="#eab839" fill-opacity="0.86"/><rect x="1074" y="192.35" width="918.5" height="1.3" fill="#6ed0e0" fill-opacity="0.86"/></svg>
<div class="t title med" style="left:1333.5px;top:115px;letter-spacing:-0.05px">Workers</div>
<div class="t ax axr" style="left:1005.75px;top:300.5px">0</div>
<div class="t ax axr" style="left:1005.75px;top:262.5px">1</div>
<div class="t ax axr" style="left:1005.75px;top:224.5px">2</div>
<div class="t ax axr" style="left:1005.75px;top:186.5px">3</div>
<div class="t ax axr" style="left:1005.75px;top:148.5px">4</div>
<div class="t ax axc" style="left:1092.67px;top:316px">07:30</div>
<div class="t ax axc" style="left:1168.67px;top:316px">08:00</div>
<div class="t ax axc" style="left:1245.67px;top:316px">08:30</div>
<div class="t ax axc" style="left:1321.67px;top:316px">09:00</div>
<div class="t ax axc" style="left:1398.67px;top:316px">09:30</div>
<div class="t ax axc" style="left:1474.67px;top:316px">10:00</div>
<div class="t ax axc" style="left:1551.67px;top:316px">10:30</div>
<div class="t ax axc" style="left:1628.67px;top:316px">11:00</div>
<div class="t ax axc" style="left:1704.67px;top:316px">11:30</div>
<div class="t ax axc" style="left:1781.67px;top:316px">12:00</div>
<div class="t ax axc" style="left:1857.67px;top:316px">12:30</div>
<div class="t ax axc" style="left:1934.67px;top:316px">13:00</div>
<div class="sw" style="left:1068px;top:344px;background:#7eb26d"></div>
<div class="t lg" style="left:1090px;top:339px">7s8lg8kvnh</div>
<div class="sw" style="left:1163px;top:344px;background:#eab839"></div>
<div class="t lg" style="left:1185px;top:339px">crczgpkqzj</div>
<div class="sw" style="left:1254px;top:344px;background:#6ed0e0"></div>
<div class="t lg" style="left:1276px;top:339px">z985654tsw</div>
<svg class="ic" style="left:0;top:0;width:2032px;height:1296px;pointer-events:none" viewBox="0 0 2032 1296"><rect x="101" y="573" width="915" height="1" fill="#f0faff" fill-opacity="0.157" shape-rendering="crispEdges"/><rect x="101" y="522" width="915" height="1" fill="#f0faff" fill-opacity="0.157" shape-rendering="crispEdges"/><rect x="101" y="472" width="915" height="1" fill="#f0faff" fill-opacity="0.157" shape-rendering="crispEdges"/><rect x="101" y="421" width="915" height="1" fill="#f0faff" fill-opacity="0.157" shape-rendering="crispEdges"/><rect x="149" y="421" width="1" height="153" fill="#f0faff" fill-opacity="0.157" shape-rendering="crispEdges"/><rect x="225" y="421" width="1" height="153" fill="#f0faff" fill-opacity="0.157" shape-rendering="crispEdges"/><rect x="301" y="421" width="1" height="153" fill="#f0faff" fill-opacity="0.157" shape-rendering="crispEdges"/><rect x="377" y="421" width="1" height="153" fill="#f0faff" fill-opacity="0.157" shape-rendering="crispEdges"/><rect x="454" y="421" width="1" height="153" fill="#f0faff" fill-opacity="0.157" shape-rendering="crispEdges"/><rect x="530" y="421" width="1" height="153" fill="#f0faff" fill-opacity="0.157" shape-rendering="crispEdges"/><rect x="606" y="421" width="1" height="153" fill="#f0faff" fill-opacity="0.157" shape-rendering="crispEdges"/><rect x="682" y="421" width="1" height="153" fill="#f0faff" fill-opacity="0.157" shape-rendering="crispEdges"/><rect x="759" y="421" width="1" height="153" fill="#f0faff" fill-opacity="0.157" shape-rendering="crispEdges"/><rect x="835" y="421" width="1" height="153" fill="#f0faff" fill-opacity="0.157" shape-rendering="crispEdges"/><rect x="911" y="421" width="1" height="153" fill="#f0faff" fill-opacity="0.157" shape-rendering="crispEdges"/><rect x="987" y="421" width="1" height="153" fill="#f0faff" fill-opacity="0.157" shape-rendering="crispEdges"/><rect x="101" y="491.93" width="914.0" height="81.07" fill="#7eb26d" fill-opacity="0.1"/><rect x="101" y="471.67" width="914.0" height="20.27" fill="#eab839" fill-opacity="0.1"/><rect x="101" y="431.13" width="914.0" height="40.53" fill="#6ed0e0" fill-opacity="0.1"/><rect x="101" y="491.28" width="914.0" height="1.3" fill="#7eb26d" fill-opacity="0.86"/><rect x="101" y="471.02" width="914.0" height="1.3" fill="#eab839" fill-opacity="0.86"/><rect x="101" y="430.48" width="914.0" height="1.3" fill="#6ed0e0" fill-opacity="0.86"/></svg>
<div class="t title med" style="left:356.5px;top:381px;letter-spacing:0.1px">Total Nodes</div>
<div class="t ax axr" style="left:35.5px;top:566.5px">0</div>
<div class="t ax axr" style="left:35.5px;top:516.8px">5</div>
<div class="t ax axr" style="left:35.5px;top:465.8px">10</div>
<div class="t ax axr" style="left:35.5px;top:414.5px">15</div>
<div class="t ax axc" style="left:118.67px;top:582px">07:30</div>
<div class="t ax axc" style="left:195.67px;top:582px">08:00</div>
<div class="t ax axc" style="left:271.67px;top:582px">08:30</div>
<div class="t ax axc" style="left:347.67px;top:582px">09:00</div>
<div class="t ax axc" style="left:423.67px;top:582px">09:30</div>
<div class="t ax axc" style="left:500.67px;top:582px">10:00</div>
<div class="t ax axc" style="left:576.67px;top:582px">10:30</div>
<div class="t ax axc" style="left:652.67px;top:582px">11:00</div>
<div class="t ax axc" style="left:728.67px;top:582px">11:30</div>
<div class="t ax axc" style="left:805.67px;top:582px">12:00</div>
<div class="t ax axc" style="left:881.67px;top:582px">12:30</div>
<div class="t ax axc" style="left:957.67px;top:582px">13:00</div>
<div class="sw" style="left:91px;top:610px;background:#7eb26d"></div>
<div class="t lg" style="left:113px;top:605px">7s8lg8kvnh</div>
<div class="sw" style="left:186px;top:610px;background:#eab839"></div>
<div class="t lg" style="left:208px;top:605px">crczgpkqzj</div>
<div class="sw" style="left:277px;top:610px;background:#6ed0e0"></div>
<div class="t lg" style="left:299px;top:605px">z985654tsw</div>
<svg class="ic" style="left:0;top:0;width:2032px;height:1296px;pointer-events:none" viewBox="0 0 2032 1296"><rect x="1095" y="573" width="898" height="1" fill="#f0faff" fill-opacity="0.157" shape-rendering="crispEdges"/><rect x="1095" y="535" width="898" height="1" fill="#f0faff" fill-opacity="0.157" shape-rendering="crispEdges"/><rect x="1095" y="497" width="898" height="1" fill="#f0faff" fill-opacity="0.157" shape-rendering="crispEdges"/><rect x="1095" y="459" width="898" height="1" fill="#f0faff" fill-opacity="0.157" shape-rendering="crispEdges"/><rect x="1095" y="421" width="898" height="1" fill="#f0faff" fill-opacity="0.157" shape-rendering="crispEdges"/><rect x="1142" y="421" width="1" height="153" fill="#f0faff" fill-opacity="0.157" shape-rendering="crispEdges"/><rect x="1217" y="421" width="1" height="153" fill="#f0faff" fill-opacity="0.157" shape-rendering="crispEdges"/><rect x="1292" y="421" width="1" height="153" fill="#f0faff" fill-opacity="0.157" shape-rendering="crispEdges"/><rect x="1366" y="421" width="1" height="153" fill="#f0faff" fill-opacity="0.157" shape-rendering="crispEdges"/><rect x="1441" y="421" width="1" height="153" fill="#f0faff" fill-opacity="0.157" shape-rendering="crispEdges"/><rect x="1516" y="421" width="1" height="153" fill="#f0faff" fill-opacity="0.157" shape-rendering="crispEdges"/><rect x="1591" y="421" width="1" height="153" fill="#f0faff" fill-opacity="0.157" shape-rendering="crispEdges"/><rect x="1666" y="421" width="1" height="153" fill="#f0faff" fill-opacity="0.157" shape-rendering="crispEdges"/><rect x="1741" y="421" width="1" height="153" fill="#f0faff" fill-opacity="0.157" shape-rendering="crispEdges"/><rect x="1815" y="421" width="1" height="153" fill="#f0faff" fill-opacity="0.157" shape-rendering="crispEdges"/><rect x="1890" y="421" width="1" height="153" fill="#f0faff" fill-opacity="0.157" shape-rendering="crispEdges"/><rect x="1965" y="421" width="1" height="153" fill="#f0faff" fill-opacity="0.157" shape-rendering="crispEdges"/><rect x="1095" y="572" width="897.0" height="2" fill="#94c6a0"/></svg>
<div class="t title med" style="left:1333.5px;top:381px;letter-spacing:-0.1px">5min Error Rate</div>
<div class="t ax axr" style="left:1028.5px;top:566.5px">0</div>
<div class="t ax axr" style="left:1028.5px;top:528.5px">0.250</div>
<div class="t ax axr" style="left:1028.5px;top:490.5px">0.500</div>
<div class="t ax axr" style="left:1028.5px;top:452.5px">0.750</div>
<div class="t ax axr" style="left:1028.5px;top:414.5px">1</div>
<div class="t ax axc" style="left:1111.67px;top:582px">07:30</div>
<div class="t ax axc" style="left:1186.67px;top:582px">08:00</div>
<div class="t ax axc" style="left:1261.67px;top:582px">08:30</div>
<div class="t ax axc" style="left:1336.67px;top:582px">09:00</div>
<div class="t ax axc" style="left:1411.67px;top:582px">09:30</div>
<div class="t ax axc" style="left:1486.67px;top:582px">10:00</div>
<div class="t ax axc" style="left:1560.67px;top:582px">10:30</div>
<div class="t ax axc" style="left:1635.67px;top:582px">11:00</div>
<div class="t ax axc" style="left:1710.67px;top:582px">11:30</div>
<div class="t ax axc" style="left:1785.67px;top:582px">12:00</div>
<div class="t ax axc" style="left:1860.67px;top:582px">12:30</div>
<div class="t ax axc" style="left:1935.67px;top:582px">13:00</div>
<div class="sw" style="left:1068px;top:610px;background:#7eb26d"></div>
<div class="t lg" style="left:1090px;top:605px">7s8lg8kvnh</div>
<div class="sw" style="left:1163px;top:610px;background:#eab839"></div>
<div class="t lg" style="left:1185px;top:605px">crczgpkqzj</div>
<div class="sw" style="left:1254px;top:610px;background:#6ed0e0"></div>
<div class="t lg" style="left:1276px;top:605px">z985654tsw</div>
</div></body></html>
